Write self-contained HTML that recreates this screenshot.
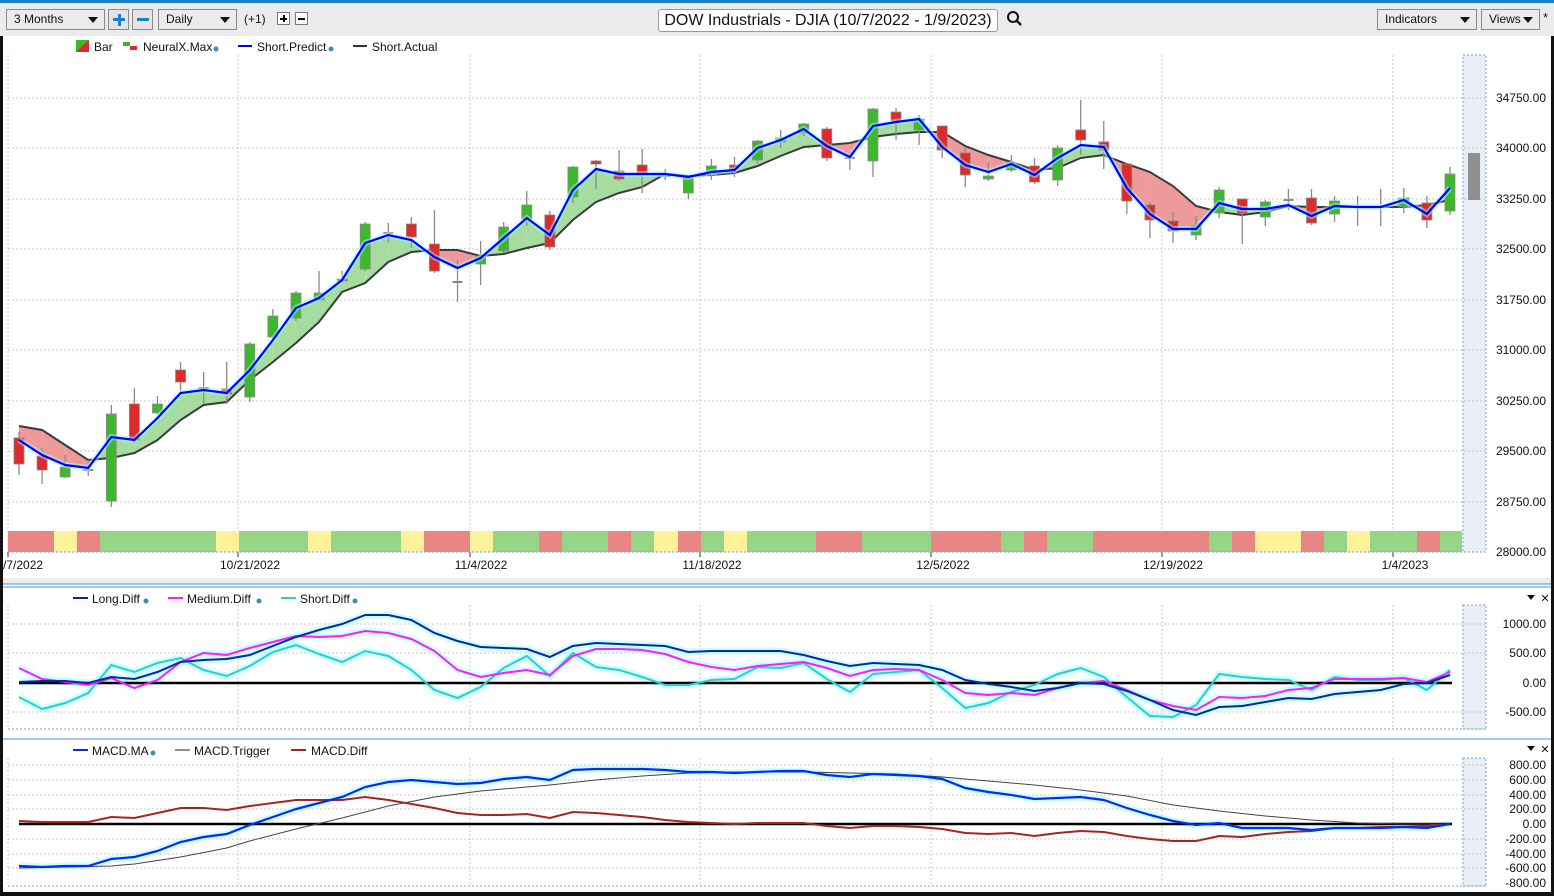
<!DOCTYPE html>
<html><head><meta charset="utf-8"><style>
*{margin:0;padding:0;box-sizing:border-box}
body{width:1554px;height:896px;overflow:hidden;background:#fff;font-family:"Liberation Sans",sans-serif;position:relative}
.tb{position:absolute;left:0;top:0;width:1554px;height:36px;background:#ebebeb;border-top:3px solid #1f7fc7}
.dd{position:absolute;top:9px;height:21px;border:1px solid #8a8a8a;background:#ebebeb;font-size:12px;line-height:19px;padding-left:7px;color:#111}
.dd:after{content:"";position:absolute;right:6px;top:7px;border-left:5px solid transparent;border-right:5px solid transparent;border-top:6px solid #111}
.btn{position:absolute;top:9px;width:21px;height:21px;border:1px solid #8a8a8a;background:#e4e4e4}
.t{position:absolute;font-size:12px;color:#111;white-space:nowrap}
svg{position:absolute;left:0;top:0}
</style></head><body>
<div class="tb"></div>
<div class="dd" style="left:6px;width:99px">3 Months</div>
<div class="btn" style="left:108px"><div style="position:absolute;left:4px;top:8px;width:12px;height:3px;background:#1f7fc7"></div><div style="position:absolute;left:8.5px;top:3.5px;width:3px;height:12px;background:#1f7fc7"></div></div>
<div class="btn" style="left:132px"><div style="position:absolute;left:4px;top:8px;width:12px;height:3px;background:#1f7fc7"></div></div>
<div class="dd" style="left:158px;width:79px">Daily</div>
<div class="t" style="left:244px;top:12px">(+1)</div>
<div style="position:absolute;left:277px;top:12px;width:13px;height:13px;border:1px solid #777;background:#fff"><div style="position:absolute;left:2px;top:4.5px;width:7px;height:2px;background:#000"></div><div style="position:absolute;left:4.5px;top:2px;width:2px;height:7px;background:#000"></div></div>
<div style="position:absolute;left:295px;top:12px;width:13px;height:13px;border:1px solid #777;background:#fff"><div style="position:absolute;left:2px;top:4.5px;width:7px;height:2px;background:#000"></div></div>
<div style="position:absolute;left:658px;top:9px;width:340px;height:23px;border:1px solid #999;border-radius:3px;background:#fff;font-size:16px;line-height:21px;text-align:center;color:#111">DOW Industrials - DJIA (10/7/2022 - 1/9/2023)</div>
<svg width="20" height="20" style="left:1006px;top:10px"><circle cx="7" cy="7" r="5" fill="none" stroke="#111" stroke-width="2"/><line x1="10.5" y1="10.5" x2="15" y2="15" stroke="#111" stroke-width="2.5"/></svg>
<div class="dd" style="left:1377px;width:100px">Indicators</div>
<div class="dd" style="left:1481px;width:59px">Views</div>
<div class="t" style="left:1543px;top:10px;font-size:13px">*</div>
<svg id="s" width="1554" height="896"></svg>
<script>
const S=document.getElementById('s');let h='';
const X=i=>19+23.08*i;
function P(a){return a.map((v,i)=>X(i).toFixed(1)+','+v).join(' ')}
// borders
h+='<rect x="0" y="36" width="3" height="860" fill="#111"/><rect x="1551" y="36" width="3" height="860" fill="#111"/><rect x="0" y="892" width="1554" height="4" fill="#111"/>';
// grids
function grid(y0,y1,ys){let s='';[8,238,470,700,931,1162,1393].forEach(x=>s+=`<line x1="${x}" y1="${y0}" x2="${x}" y2="${y1}" stroke="#c8c8c8" stroke-dasharray="2,2"/>`);ys.forEach(y=>s+=`<line x1="8" y1="${y}" x2="1486" y2="${y}" stroke="#c8c8c8" stroke-dasharray="2,2"/>`);return s}
function hatch(y0,y1){return `<rect x="1463" y="${y0}" width="23" height="${y1-y0}" fill="#e9eef4" stroke="#6aa6d8" stroke-dasharray="2,2"/>`}
h+=hatch(55,552)+grid(55,552,[98,148,199,249,300,350,401,451,502]);
h+='<rect x="1468" y="153" width="12" height="47" fill="#8f8f8f"/>';
// color bar
const cb=[[8,54,'r'],[54,77,'y'],[77,100,'r'],[100,216,'g'],[216,239,'y'],[239,308,'g'],[308,331,'y'],[331,401,'g'],[401,424,'y'],[424,470,'r'],[470,493,'y'],[493,539,'g'],[539,562,'r'],[562,608,'g'],[608,631,'r'],[631,654,'g'],[654,678,'y'],[678,701,'r'],[701,724,'g'],[724,747,'y'],[747,816,'g'],[816,862,'r'],[862,931,'g'],[931,1001,'r'],[1001,1024,'g'],[1024,1047,'r'],[1047,1093,'g'],[1093,1209,'r'],[1209,1232,'g'],[1232,1255,'r'],[1255,1301,'y'],[1301,1324,'r'],[1324,1347,'g'],[1347,1370,'y'],[1370,1417,'g'],[1417,1440,'r'],[1440,1462,'g']];
const cc={r:'#e88585',y:'#fdf29a',g:'#95d585'};
cb.forEach(c=>h+=`<rect x="${c[0]}" y="531" width="${c[1]-c[0]}" height="21" fill="${cc[c[2]]}"/>`);
h+='<line x1="8" y1="552" x2="1486" y2="552" stroke="#6aa6d8" stroke-dasharray="2,2"/>';
[8,238,470,700,931,1162,1393].forEach(x=>h+=`<line x1="${x}" y1="552" x2="${x}" y2="557" stroke="#999" stroke-width="2"/>`);
// candles: [open?] data: color, top, bottom, wickTop, wickBottom
const C=[['r',438,464,432,475],['r',456,470,448,484],['g',467,477,455,478],['f',470,470,460,476],['g',414,501,405,507],['r',404,440,388,443],['g',404,413,396,415],['r',370,382,362,392],['f',388,388,372,404],['r',389,394,362,404],['g',344,397,342,402],['g',316,337,309,339],['g',293,318,291,321],['g',293,300,271,300],['r',279,281,271,283],['g',224,269,222,271],['f',233,233,223,243],['r',224,237,217,248],['r',244,271,210,273],['f',282,282,260,302],['g',256,264,241,285],['g',227,251,222,253],['g',205,219,191,226],['r',215,247,211,250],['g',167,197,166,203],['r',161,164,160,189],['r',171,179,150,181],['r',165,175,149,193],['f',176,176,169,180],['g',178,193,175,199],['g',166,175,159,180],['r',165,169,157,177],['g',141,160,140,164],['g',138,142,130,148],['g',124,133,123,136],['r',129,158,127,161],['f',158,158,152,170],['g',109,161,108,177],['r',112,121,108,140],['g',119,130,115,145],['r',126,150,126,158],['r',153,175,147,187],['g',176,179,162,181],['g',163,170,155,172],['r',166,182,158,184],['g',148,180,145,186],['r',130,140,100,155],['r',142,150,121,169],['r',164,201,163,214],['r',205,220,202,238],['r',221,231,212,243],['g',226,235,216,240],['g',190,213,187,218],['r',199,213,199,244],['g',202,217,200,226],['f',200,200,189,210],['r',198,223,189,225],['g',201,214,196,222],['f',207,207,196,226],['f',207,207,189,226],['g',198,207,188,213],['r',203,220,196,228],['g',174,211,167,215]];
const pr=[440,455,465,468,437,440,418,393,390,393,370,340,308,298,280,243,235,240,257,268,258,238,218,235,190,169,174,174,174,177,172,170,148,140,129,146,157,126,122,119,147,165,172,164,175,158,145,147,188,214,229,229,203,209,209,205,216,206,207,207,200,214,188];
const ac=[426,430,445,460,458,453,440,420,405,402,380,362,343,322,292,283,262,252,250,250,256,254,248,243,220,202,193,187,174,176,175,173,166,156,147,145,143,137,134,132,132,146,155,162,170,168,158,155,164,172,186,206,212,215,212,206,207,207,207,207,207,205,200];
// fills
for(let i=0;i<pr.length-1;i++){const x0=X(i),x1=X(i+1),d0=pr[i]-ac[i],d1=pr[i+1]-ac[i+1];
 const col=d=>d<0?'#a6dca0':'#ee9a9a';
 if(d0*d1<0){const t=d0/(d0-d1),xm=x0+t*(x1-x0),ym=pr[i]+t*(pr[i+1]-pr[i]);
  h+=`<polygon points="${x0},${pr[i]} ${xm},${ym} ${x0},${ac[i]}" fill="${col(d0)}"/><polygon points="${xm},${ym} ${x1},${pr[i+1]} ${x1},${ac[i+1]}" fill="${col(d1)}"/>`;}
 else h+=`<polygon points="${x0},${pr[i]} ${x1},${pr[i+1]} ${x1},${ac[i+1]} ${x0},${ac[i]}" fill="${col(d0+d1)}"/>`;}
h+=`<polyline points="${P(ac)}" fill="none" stroke="#3a3a3a" stroke-width="2"/>`;
C.forEach((c,i)=>{const x=X(i);h+=`<line x1="${x}" y1="${c[3]}" x2="${x}" y2="${c[4]}" stroke="#8a8a8a" stroke-width="1.3"/>`;
 if(c[0]=='f')h+=`<rect x="${x-5}" y="${c[1]-1}" width="10" height="2" fill="#8a8a8a"/>`;
 else h+=`<rect x="${x-5}" y="${c[1]}" width="10" height="${Math.max(2,c[2]-c[1])}" fill="${c[0]=='g'?'#3db82c':'#dd2a2a'}" stroke="#8a8a8a" stroke-width="0.8"/>`;});
h+=`<polyline points="${P(pr)}" fill="none" stroke="#9ff" stroke-opacity=".5" stroke-width="6"/><polyline points="${P(pr)}" fill="none" stroke="#0000ff" stroke-width="2.2"/>`;
// labels
const txt=(x,y,s,a,sz)=>`<text x="${x}" y="${y}" font-size="${sz||12}" text-anchor="${a||'start'}" fill="#111" font-family="Liberation Sans,sans-serif">${s}</text>`;
[[98,'34750.00'],[148,'34000.00'],[199,'33250.00'],[249,'32500.00'],[300,'31750.00'],[350,'31000.00'],[401,'30250.00'],[451,'29500.00'],[502,'28750.00'],[552,'28000.00']].forEach(a=>h+=txt(1546,a[0]+4,a[1],'end'));
[[3,'/7/2022','start'],[250,'10/21/2022','middle'],[481,'11/4/2022','middle'],[712,'11/18/2022','middle'],[943,'12/5/2022','middle'],[1173,'12/19/2022','middle'],[1405,'1/4/2023','middle']].forEach(a=>h+=txt(a[0],569,a[1],a[2]));
// legend 1
h+='<rect x="76" y="40" width="13" height="12" fill="#3db82c"/><polygon points="89,40 89,52 76,52" fill="#dd2a2a"/>';
h+=txt(94,51,'Bar');
h+='<rect x="123" y="42" width="7" height="4" fill="#3db82c"/><rect x="130" y="46" width="7" height="4" fill="#dd2a2a"/>'+txt(143,51,'NeuralX.Max');
h+='<circle cx="216" cy="49" r="2.5" fill="#3a8fb0"/>';
h+='<line x1="238" y1="46" x2="252" y2="46" stroke="#00f" stroke-width="2"/>'+txt(257,51,'Short.Predict')+'<circle cx="331" cy="49" r="2.5" fill="#3a8fb0"/>';
h+='<line x1="353" y1="46" x2="367" y2="46" stroke="#333" stroke-width="2"/>'+txt(372,51,'Short.Actual');
// separators
h+='<rect x="3" y="578" width="1548" height="6" fill="#ececec"/><line x1="3" y1="584" x2="1551" y2="584" stroke="#4a90d0"/><line x1="3" y1="587" x2="1551" y2="587" stroke="#4a90d0"/>';
h+='<line x1="3" y1="739" x2="1551" y2="739" stroke="#4a90d0"/>';
// panel 2
h+=hatch(605,729)+grid(605,729,[624,653,712]);
h+='<line x1="8" y1="729" x2="1486" y2="729" stroke="#6aa6d8" stroke-dasharray="2,2"/>';
const L=[682,681,681,683,677,679,672,662,660,659,655,646,637,630,624,615,615,620,633,641,647,648,649,657,646,643,644,645,646,652,651,651,651,651,655,661,666,663,664,665,670,680,684,687,691,688,683,684,691,700,710,715,707,706,702,698,699,694,692,690,684,683,675];
const M=[668,679,682,685,678,688,680,662,653,655,648,642,636,637,636,631,633,639,651,670,677,673,670,675,656,649,649,650,654,662,667,670,666,664,662,668,676,670,669,670,680,693,695,693,695,688,683,681,690,700,706,710,697,698,696,690,688,679,679,679,678,682,672];
const Sd=[697,709,703,693,665,672,663,658,670,676,666,652,645,654,662,651,656,670,690,698,687,668,656,676,653,667,670,677,685,685,680,679,667,668,663,679,692,674,672,670,688,708,703,692,685,674,668,677,697,716,717,705,674,677,679,680,690,677,680,680,678,690,670];
[L,M,Sd].forEach(a=>h+=`<polyline points="${P(a)}" fill="none" stroke="#aff" stroke-opacity=".6" stroke-width="7"/>`);
h+=`<line x1="19" y1="683" x2="1452" y2="683" stroke="#000" stroke-width="2.5"/>`;
h+=`<polyline points="${P(Sd)}" fill="none" stroke="#30cccc" stroke-width="2"/><polyline points="${P(M)}" fill="none" stroke="#ff1aff" stroke-width="2"/><polyline points="${P(L)}" fill="none" stroke="#0a2a9c" stroke-width="2"/>`;
[[624,'1000.00'],[653,'500.00'],[683,'0.00'],[712,'-500.00']].forEach(a=>h+=txt(1546,a[0]+4,a[1],'end'));
h+='<line x1="73" y1="598" x2="88" y2="598" stroke="#0a2a9c" stroke-width="2"/>'+txt(92,603,'Long.Diff')+'<circle cx="146" cy="601" r="2.5" fill="#3a8fb0"/>';
h+='<line x1="168" y1="598" x2="183" y2="598" stroke="#ff1aff" stroke-width="2"/>'+txt(187,603,'Medium.Diff')+'<circle cx="259" cy="601" r="2.5" fill="#3a8fb0"/>';
h+='<line x1="281" y1="598" x2="296" y2="598" stroke="#30cccc" stroke-width="2"/>'+txt(300,603,'Short.Diff')+'<circle cx="355" cy="601" r="2.5" fill="#3a8fb0"/>';
h+='<polygon points="1527,595 1535,595 1531,600" fill="#111"/>'+txt(1545,602,'✕','middle',11);
// panel 3
h+=hatch(758,886)+grid(758,886,[765,780,795,809,839,854,868]);
h+='<line x1="8" y1="886" x2="1486" y2="886" stroke="#6aa6d8" stroke-dasharray="2,2"/>';
const MA=[866,867,866,866,859,857,851,842,837,834,825,817,809,803,797,787,782,780,782,784,783,779,777,780,770,769,769,769,770,772,772,773,772,771,771,775,777,774,775,776,779,788,792,795,799,798,797,800,808,815,821,825,823,828,828,828,830,828,828,828,827,828,824];
const TRk=[[0,868],[4,866],[5,864],[7,857],[9,848],[10,841],[12,829],[14,818],[16,806],[18,797],[20,791],[23,785],[25,780],[27,776],[29,773],[31,772],[34,772],[36,773],[38,774],[40,777],[42,781],[44,785],[46,790],[48,796],[50,805],[52,811],[54,816],[56,820],[58,823],[60,824],[62,824]];
const DF=[821,822,822,822,817,818,813,808,808,810,806,803,800,800,800,797,800,804,808,813,815,815,814,818,812,813,815,817,820,822,823,824,823,823,823,826,828,826,826,827,829,833,834,833,836,833,831,832,836,839,841,841,836,837,834,832,831,828,828,827,827,826,824];
h+=`<polyline points="${P(MA)}" fill="none" stroke="#aff" stroke-opacity=".6" stroke-width="7"/>`;
h+=`<line x1="19" y1="824" x2="1452" y2="824" stroke="#000" stroke-width="2.5"/>`;
h+=`<polyline points="${TRk.map(p=>X(p[0]).toFixed(1)+','+p[1]).join(' ')}" fill="none" stroke="#444" stroke-width="1"/>`;
h+=`<polyline points="${P(DF)}" fill="none" stroke="#a52525" stroke-width="2"/><polyline points="${P(MA)}" fill="none" stroke="#0a2af0" stroke-width="2.2"/>`;
[[765,'800.00'],[780,'600.00'],[795,'400.00'],[809,'200.00'],[824,'0.00'],[839,'-200.00'],[854,'-400.00'],[868,'-600.00'],[883,'-800.00']].forEach(a=>h+=txt(1546,a[0]+4,a[1],'end'));
h+='<line x1="73" y1="750" x2="88" y2="750" stroke="#0a2af0" stroke-width="2"/>'+txt(92,755,'MACD.MA')+'<circle cx="153" cy="753" r="2.5" fill="#3a8fb0"/>';
h+='<line x1="175" y1="750" x2="190" y2="750" stroke="#444" stroke-width="1.2"/>'+txt(194,755,'MACD.Trigger');
h+='<line x1="291" y1="750" x2="306" y2="750" stroke="#a52525" stroke-width="2"/>'+txt(311,755,'MACD.Diff');
h+='<polygon points="1527,746 1535,746 1531,751" fill="#111"/>'+txt(1545,753,'✕','middle',11);
S.innerHTML=h;
</script>
</body></html>
